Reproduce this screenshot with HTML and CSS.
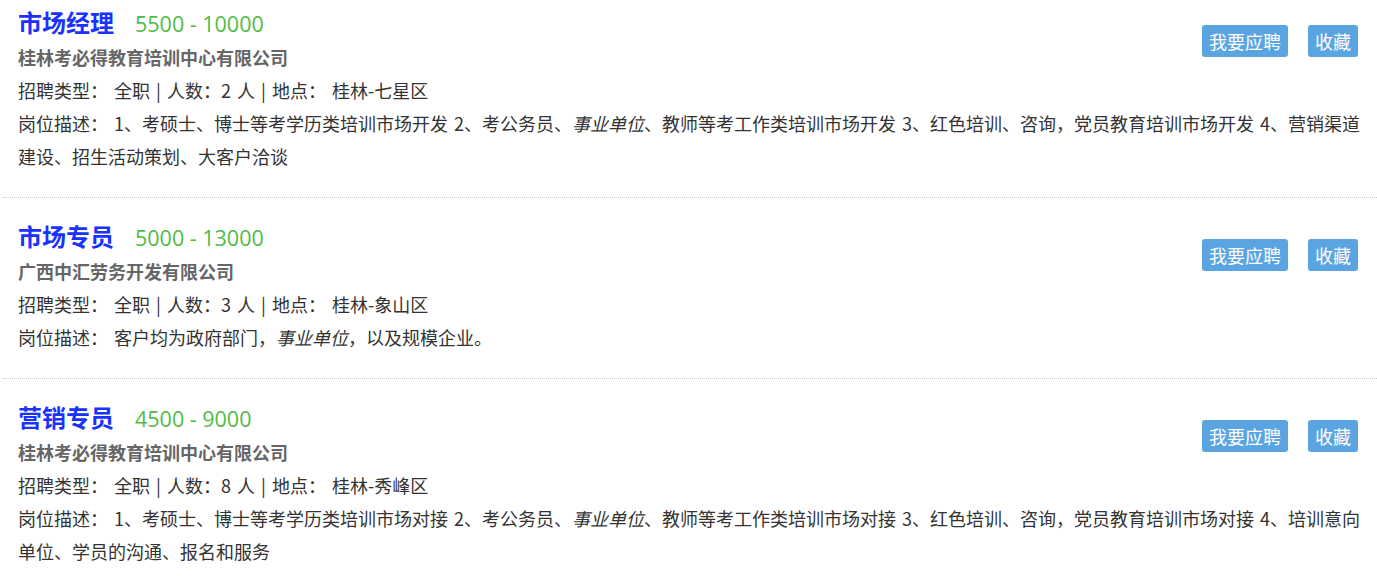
FILE: index.html
```html
<!DOCTYPE html>
<html lang="zh-CN">
<head>
<meta charset="utf-8">
<title>职位列表</title>
<link rel="stylesheet" href="styles.css">
</head>
<body>
<div class="list">
  <div class="job job-first">
    <div class="head">
      <span class="title">市场经理</span><span class="salary">5500 - 10000</span>
    </div>
    <div class="actions">
      <a class="btn">我要应聘</a><a class="btn">收藏</a>
    </div>
    <div class="company">桂林考必得教育培训中心有限公司</div>
    <div class="line">招聘类型： 全职 | 人数：2 人 | 地点： 桂林-七星区</div>
    <div class="line">岗位描述： 1、考硕士、博士等考学历类培训市场开发 2、考公务员、<em>事业单位</em>、教师等考工作类培训市场开发 3、红色培训、咨询，党员教育培训市场开发 4、营销渠道建设、招生活动策划、大客户洽谈</div>
  </div>
  <div class="job">
    <div class="head">
      <span class="title">市场专员</span><span class="salary">5000 - 13000</span>
    </div>
    <div class="actions">
      <a class="btn">我要应聘</a><a class="btn">收藏</a>
    </div>
    <div class="company">广西中汇劳务开发有限公司</div>
    <div class="line">招聘类型： 全职 | 人数：3 人 | 地点： 桂林-象山区</div>
    <div class="line">岗位描述： 客户均为政府部门，<em>事业单位</em>，以及规模企业。</div>
  </div>
  <div class="job">
    <div class="head">
      <span class="title">营销专员</span><span class="salary">4500 - 9000</span>
    </div>
    <div class="actions">
      <a class="btn">我要应聘</a><a class="btn">收藏</a>
    </div>
    <div class="company">桂林考必得教育培训中心有限公司</div>
    <div class="line">招聘类型： 全职 | 人数：8 人 | 地点： 桂林-秀峰区</div>
    <div class="line">岗位描述： 1、考硕士、博士等考学历类培训市场对接 2、考公务员、<em>事业单位</em>、教师等考工作类培训市场对接 3、红色培训、咨询，党员教育培训市场对接 4、培训意向单位、学员的沟通、报名和服务</div>
  </div>
</div>
</body>
</html>
```

FILE: styles.css
```css
html, body {
  margin: 0;
  padding: 0;
  background: #fff;
}
body {
  font-family: "Noto Sans CJK SC", "Noto Sans", sans-serif;
  color: #333;
  font-size: 18px;
}
.list {
  padding: 0 0 0 3px;
}
.job {
  display: grid;
  grid-template-columns: 1fr auto;
  padding: 20px 10px 24px 15px;
  border-bottom: 1px dotted #c8c8c8;
}
.job-first {
  padding-top: 4px;
}
.head {
  grid-column: 1;
  grid-row: 1;
  line-height: 36px;
  height: 36px;
  white-space: nowrap;
}
.title {
  font-size: 24px;
  font-weight: bold;
  color: #1a32ff;
}
.salary {
  margin-left: 21px;
  font-family: "Open Sans", "Noto Sans", sans-serif;
  font-size: 21.5px;
  color: #52bb45;
}
.actions {
  grid-column: 2;
  grid-row: 1 / span 2;
  display: flex;
  gap: 20px;
  padding-top: 21px;
  margin-right: 9px;
  align-items: flex-start;
}
.btn {
  display: block;
  background: #5aa5e1;
  color: #fff;
  font-size: 18px;
  line-height: 32px;
  height: 32px;
  padding: 0 7px;
  border-radius: 3px;
}
.company {
  grid-column: 1;
  grid-row: 2;
  font-weight: bold;
  color: #666;
  line-height: 34px;
}
.line {
  grid-column: 1 / span 2;
  line-height: 33px;
  word-spacing: 2px;
}
.line em {
  font-style: italic;
}
```
